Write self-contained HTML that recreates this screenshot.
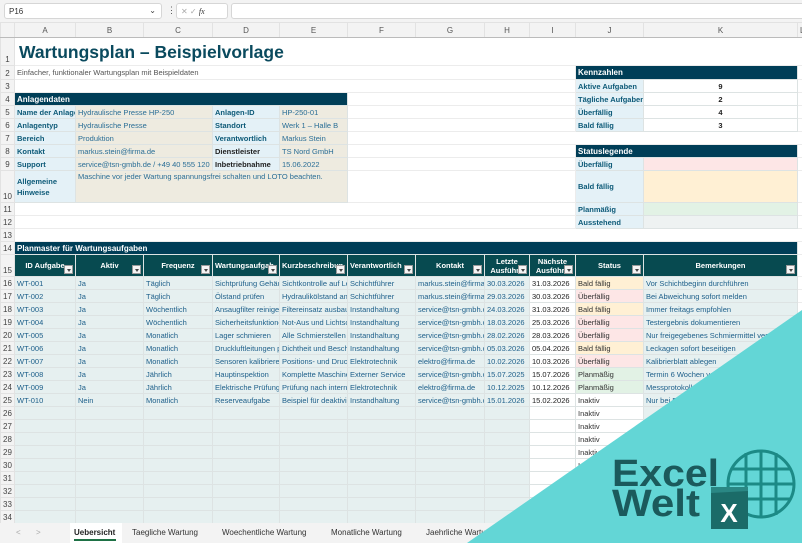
<!DOCTYPE html>
<html><head><meta charset="utf-8"><style>
*{box-sizing:border-box;margin:0;padding:0}
body{width:802px;height:543px;overflow:hidden;background:#fff;font-family:"Liberation Sans",sans-serif;position:relative}
#fb{position:absolute;left:0;top:0;width:802px;height:22px;background:#f3f3f3}
.box{position:absolute;background:#fff;border:1px solid #d6d6d6;border-radius:3px;top:3px;height:16px;font-size:8px;color:#333;padding:3px 4px}
table{position:absolute;left:0;top:22px;border-collapse:collapse;table-layout:fixed;width:802px}
td{height:13px;font-size:7.5px;white-space:nowrap;overflow:hidden;border:1px solid #dde3e3;padding:0 2px;color:#1d5f8a;line-height:11px}
td.rh{background:#f3f3f3;color:#444;text-align:center;border-color:#e2e2e2;font-size:8px;vertical-align:bottom;padding:0}
tr.ch td{background:#f3f3f3;color:#555;text-align:center;height:15px;border-color:#e2e2e2;border-bottom:1px solid #bbb;font-size:8px}
td.w{border-color:#ececec;background:#fff}
.hd{background:#003e57;color:#fff;font-weight:bold;font-size:8px}
.lb{background:#e4f1f7;color:#0d5a78;font-weight:bold}
.vl{background:#eeebe0;color:#2a6e96}
.kv{background:#fff;text-align:center;color:#222;font-weight:bold}
.th{background:#074a50;color:#fff;font-weight:bold;text-align:center;position:relative;font-size:7.5px;line-height:9px}
.th i{position:absolute;right:2px;bottom:2px;width:9px;height:9px;background:#f4f4f4;border:1px solid #999}
.th i:after{content:"";position:absolute;left:2px;top:3px;border-left:2px solid transparent;border-right:2px solid transparent;border-top:3px solid #444}
.d{background:#e6f0f0}
.wh{background:#fff;color:#222}
.bf{background:#fff0d4;color:#333}
.uf{background:#fde6e6;color:#333}
.pm{background:#e2f2e5;color:#333}
.ia{background:#fff;color:#333}
#tabs{position:absolute;left:0;top:523px;width:802px;height:20px;background:#f3f3f3;font-size:8px;color:#333}
#tabs span{position:absolute;top:5px}
</style></head><body>
<div id="fb">
<div class="box" style="left:4px;width:158px">P16<span style="position:absolute;right:5px;top:2px;color:#444">⌄</span></div>
<span style="position:absolute;left:167px;top:5px;font-size:9px;color:#555">⋮</span>
<div class="box" style="left:176px;width:52px;color:#aaa">✕ ✓ <i style="color:#333;font-family:'Liberation Serif'">fx</i></div>
<div class="box" style="left:231px;width:580px"></div>
</div>
<table>
<colgroup><col style="width:14px"><col style="width:61px"><col style="width:68px"><col style="width:69px"><col style="width:67px"><col style="width:68px"><col style="width:68px"><col style="width:69px"><col style="width:45px"><col style="width:46px"><col style="width:68px"><col style="width:154px"><col style="width:5px"></colgroup>
<tr class="ch"><td></td><td>A</td><td>B</td><td>C</td><td>D</td><td>E</td><td>F</td><td>G</td><td>H</td><td>I</td><td>J</td><td>K</td><td>L</td></tr>
<tr><td class="rh" style="height:28px">1</td><td class="w" colspan="12" style="font-size:17.5px;font-weight:bold;color:#0a4a5e;line-height:26px;overflow:visible;padding-left:4px;vertical-align:bottom">Wartungsplan – Beispielvorlage</td></tr>
<tr><td class="rh" style="height:14px">2</td><td class="w" colspan="9" style="color:#555;font-size:7.5px">Einfacher, funktionaler Wartungsplan mit Beispieldaten</td><td class="hd" colspan="2">Kennzahlen</td><td class="w"></td></tr>
<tr><td class="rh">3</td><td class="w" colspan="9"></td><td class="lb">Aktive Aufgaben</td><td class="kv">9</td><td class="w"></td></tr>
<tr><td class="rh">4</td><td class="hd" colspan="5">Anlagendaten</td><td class="w" colspan="4"></td><td class="lb">Tägliche Aufgaben</td><td class="kv">2</td><td class="w"></td></tr>
<tr><td class="rh">5</td><td class="lb">Name der Anlage</td><td class="vl" colspan="2">Hydraulische Presse HP-250</td><td class="lb">Anlagen-ID</td><td class="vl">HP-250-01</td><td class="w" colspan="4"></td><td class="lb">Überfällig</td><td class="kv">4</td><td class="w"></td></tr>
<tr><td class="rh">6</td><td class="lb">Anlagentyp</td><td class="vl" colspan="2">Hydraulische Presse</td><td class="lb">Standort</td><td class="vl">Werk 1 – Halle B</td><td class="w" colspan="4"></td><td class="lb">Bald fällig</td><td class="kv">3</td><td class="w"></td></tr>
<tr><td class="rh">7</td><td class="lb">Bereich</td><td class="vl" colspan="2">Produktion</td><td class="lb">Verantwortlich</td><td class="vl">Markus Stein</td><td class="w" colspan="7"></td></tr>
<tr><td class="rh">8</td><td class="lb">Kontakt</td><td class="vl" colspan="2">markus.stein@firma.de</td><td class="lb" style="color:#222">Dienstleister</td><td class="vl">TS Nord GmbH</td><td class="w" colspan="4"></td><td class="hd" colspan="2">Statuslegende</td><td class="w"></td></tr>
<tr><td class="rh">9</td><td class="lb">Support</td><td class="vl" colspan="2">service@tsn-gmbh.de / +49 40 555 120</td><td class="lb" style="color:#222">Inbetriebnahme</td><td class="vl">15.06.2022</td><td class="w" colspan="4"></td><td class="lb">Überfällig</td><td class="uf"></td><td class="w"></td></tr>
<tr><td class="rh" style="height:32px">10</td><td class="lb" style="white-space:normal;line-height:11px">Allgemeine Hinweise</td><td class="vl" colspan="4" style="vertical-align:top">Maschine vor jeder Wartung spannungsfrei schalten und LOTO beachten.</td><td class="w" colspan="4"></td><td class="lb">Bald fällig</td><td class="bf"></td><td class="w"></td></tr>
<tr><td class="rh">11</td><td class="w" colspan="9"></td><td class="lb">Planmäßig</td><td class="pm"></td><td class="w"></td></tr>
<tr><td class="rh">12</td><td class="w" colspan="9"></td><td class="lb">Ausstehend</td><td style="background:#eef2f2"></td><td class="w"></td></tr>
<tr><td class="rh">13</td><td class="w" colspan="12"></td></tr>
<tr><td class="rh">14</td><td class="hd" colspan="11">Planmaster für Wartungsaufgaben</td><td class="w"></td></tr>
<tr><td class="rh" style="height:22px">15</td><td class="th">ID Aufgabe<i></i></td><td class="th">Aktiv<i></i></td><td class="th">Frequenz<i></i></td><td class="th" style="text-align:left">Wartungsaufgab<i></i></td><td class="th" style="text-align:left">Kurzbeschreibun<i></i></td><td class="th" style="text-align:left">Verantwortlich<i></i></td><td class="th">Kontakt<i></i></td><td class="th">Letzte<br>Ausführu<i></i></td><td class="th">Nächste<br>Ausführu<i></i></td><td class="th">Status<i></i></td><td class="th">Bemerkungen<i></i></td><td class="w"></td></tr>
<tr><td class="rh">16</td><td class="d">WT-001</td><td class="d">Ja</td><td class="d">Täglich</td><td class="d">Sichtprüfung Gehäuse</td><td class="d">Sichtkontrolle auf Lecks</td><td class="d">Schichtführer</td><td class="d">markus.stein@firma.de</td><td class="d">30.03.2026</td><td class="wh">31.03.2026</td><td class="bf">Bald fällig</td><td class="d">Vor Schichtbeginn durchführen</td><td class="w"></td></tr>
<tr><td class="rh">17</td><td class="d">WT-002</td><td class="d">Ja</td><td class="d">Täglich</td><td class="d">Ölstand prüfen</td><td class="d">Hydraulikölstand am</td><td class="d">Schichtführer</td><td class="d">markus.stein@firma.de</td><td class="d">29.03.2026</td><td class="wh">30.03.2026</td><td class="uf">Überfällig</td><td class="d">Bei Abweichung sofort melden</td><td class="w"></td></tr>
<tr><td class="rh">18</td><td class="d">WT-003</td><td class="d">Ja</td><td class="d">Wöchentlich</td><td class="d">Ansaugfilter reinigen</td><td class="d">Filtereinsatz ausbauen</td><td class="d">Instandhaltung</td><td class="d">service@tsn-gmbh.de</td><td class="d">24.03.2026</td><td class="wh">31.03.2026</td><td class="bf">Bald fällig</td><td class="d">Immer freitags empfohlen</td><td class="w"></td></tr>
<tr><td class="rh">19</td><td class="d">WT-004</td><td class="d">Ja</td><td class="d">Wöchentlich</td><td class="d">Sicherheitsfunktionen</td><td class="d">Not-Aus und Lichtschranke</td><td class="d">Instandhaltung</td><td class="d">service@tsn-gmbh.de</td><td class="d">18.03.2026</td><td class="wh">25.03.2026</td><td class="uf">Überfällig</td><td class="d">Testergebnis dokumentieren</td><td class="w"></td></tr>
<tr><td class="rh">20</td><td class="d">WT-005</td><td class="d">Ja</td><td class="d">Monatlich</td><td class="d">Lager schmieren</td><td class="d">Alle Schmierstellen</td><td class="d">Instandhaltung</td><td class="d">service@tsn-gmbh.de</td><td class="d">28.02.2026</td><td class="wh">28.03.2026</td><td class="uf">Überfällig</td><td class="d">Nur freigegebenes Schmiermittel verwenden</td><td class="w"></td></tr>
<tr><td class="rh">21</td><td class="d">WT-006</td><td class="d">Ja</td><td class="d">Monatlich</td><td class="d">Druckluftleitungen prüfen</td><td class="d">Dichtheit und Beschädigung</td><td class="d">Instandhaltung</td><td class="d">service@tsn-gmbh.de</td><td class="d">05.03.2026</td><td class="wh">05.04.2026</td><td class="bf">Bald fällig</td><td class="d">Leckagen sofort beseitigen</td><td class="w"></td></tr>
<tr><td class="rh">22</td><td class="d">WT-007</td><td class="d">Ja</td><td class="d">Monatlich</td><td class="d">Sensoren kalibrieren</td><td class="d">Positions- und Drucksensor</td><td class="d">Elektrotechnik</td><td class="d">elektro@firma.de</td><td class="d">10.02.2026</td><td class="wh">10.03.2026</td><td class="uf">Überfällig</td><td class="d">Kalibrierblatt ablegen</td><td class="w"></td></tr>
<tr><td class="rh">23</td><td class="d">WT-008</td><td class="d">Ja</td><td class="d">Jährlich</td><td class="d">Hauptinspektion</td><td class="d">Komplette Maschine</td><td class="d">Externer Service</td><td class="d">service@tsn-gmbh.de</td><td class="d">15.07.2025</td><td class="wh">15.07.2026</td><td class="pm">Planmäßig</td><td class="d">Termin 6 Wochen vorher</td><td class="w"></td></tr>
<tr><td class="rh">24</td><td class="d">WT-009</td><td class="d">Ja</td><td class="d">Jährlich</td><td class="d">Elektrische Prüfung</td><td class="d">Prüfung nach interner</td><td class="d">Elektrotechnik</td><td class="d">elektro@firma.de</td><td class="d">10.12.2025</td><td class="wh">10.12.2026</td><td class="pm">Planmäßig</td><td class="d">Messprotokoll</td><td class="w"></td></tr>
<tr><td class="rh">25</td><td class="d">WT-010</td><td class="d">Nein</td><td class="d">Monatlich</td><td class="d">Reserveaufgabe</td><td class="d">Beispiel für deaktivierte</td><td class="d">Instandhaltung</td><td class="d">service@tsn-gmbh.de</td><td class="d">15.01.2026</td><td class="wh">15.02.2026</td><td class="ia">Inaktiv</td><td class="d">Nur bei Bedarf</td><td class="w"></td></tr>
<tr><td class="rh">26</td><td class="d"></td><td class="d"></td><td class="d"></td><td class="d"></td><td class="d"></td><td class="d"></td><td class="d"></td><td class="d"></td><td class="wh"></td><td class="ia">Inaktiv</td><td class="d"></td><td class="w"></td></tr>
<tr><td class="rh">27</td><td class="d"></td><td class="d"></td><td class="d"></td><td class="d"></td><td class="d"></td><td class="d"></td><td class="d"></td><td class="d"></td><td class="wh"></td><td class="ia">Inaktiv</td><td class="d"></td><td class="w"></td></tr>
<tr><td class="rh">28</td><td class="d"></td><td class="d"></td><td class="d"></td><td class="d"></td><td class="d"></td><td class="d"></td><td class="d"></td><td class="d"></td><td class="wh"></td><td class="ia">Inaktiv</td><td class="d"></td><td class="w"></td></tr>
<tr><td class="rh">29</td><td class="d"></td><td class="d"></td><td class="d"></td><td class="d"></td><td class="d"></td><td class="d"></td><td class="d"></td><td class="d"></td><td class="wh"></td><td class="ia">Inaktiv</td><td class="d"></td><td class="w"></td></tr>
<tr><td class="rh">30</td><td class="d"></td><td class="d"></td><td class="d"></td><td class="d"></td><td class="d"></td><td class="d"></td><td class="d"></td><td class="d"></td><td class="wh"></td><td class="ia">Inaktiv</td><td class="d"></td><td class="w"></td></tr>
<tr><td class="rh">31</td><td class="d"></td><td class="d"></td><td class="d"></td><td class="d"></td><td class="d"></td><td class="d"></td><td class="d"></td><td class="d"></td><td class="wh"></td><td class="ia">Inaktiv</td><td class="d"></td><td class="w"></td></tr>
<tr><td class="rh">32</td><td class="d"></td><td class="d"></td><td class="d"></td><td class="d"></td><td class="d"></td><td class="d"></td><td class="d"></td><td class="d"></td><td class="wh"></td><td class="ia"></td><td class="d"></td><td class="w"></td></tr>
<tr><td class="rh">33</td><td class="d"></td><td class="d"></td><td class="d"></td><td class="d"></td><td class="d"></td><td class="d"></td><td class="d"></td><td class="d"></td><td class="wh"></td><td class="ia"></td><td class="d"></td><td class="w"></td></tr>
<tr><td class="rh">34</td><td class="d"></td><td class="d"></td><td class="d"></td><td class="d"></td><td class="d"></td><td class="d"></td><td class="d"></td><td class="d"></td><td class="wh"></td><td class="ia"></td><td class="d"></td><td class="w"></td></tr>
</table>
<div id="tabs">
<span style="left:16px;color:#aaa">&lt;</span><span style="left:36px;color:#aaa">&gt;</span>
<div style="position:absolute;left:70px;top:0;width:52px;height:20px;background:#fff"></div>
<span style="left:74px;font-weight:bold;color:#222">Uebersicht</span>
<div style="position:absolute;left:74px;top:16px;width:42px;height:2px;background:#1e7145"></div>
<span style="left:132px">Taegliche Wartung</span>
<span style="left:222px">Woechentliche Wartung</span>
<span style="left:331px">Monatliche Wartung</span>
<span style="left:426px">Jaehrliche Wartung</span>
</div>
<svg style="position:absolute;left:0;top:0" width="802" height="543">
<polygon points="802,310 802,543 467,543" fill="#63d6d6"/>
<g fill="none" stroke="#1c8a86" stroke-width="3">
<circle cx="761" cy="484" r="33"/>
<line x1="728" y1="484" x2="794" y2="484"/><line x1="731" y1="469" x2="791" y2="469"/><line x1="731" y1="499" x2="791" y2="499"/>
<line x1="746" y1="453" x2="746" y2="515"/><line x1="761" y1="451" x2="761" y2="517"/><line x1="776" y1="453" x2="776" y2="515"/>
</g>
<rect x="711" y="487" width="37" height="42" fill="#1b6b68"/>
<polygon points="711,487 748,487 748,491 711,493" fill="#2a8784"/>
<text x="729" y="522" font-family="Liberation Sans" font-weight="bold" font-size="26" fill="#fff" text-anchor="middle">X</text>
<text x="612" y="486" font-family="Liberation Sans" font-weight="bold" font-size="38" fill="#1b5a5c" textLength="107" lengthAdjust="spacingAndGlyphs">Excel</text>
<text x="612" y="516" font-family="Liberation Sans" font-weight="bold" font-size="38" fill="#1b5a5c" textLength="88" lengthAdjust="spacingAndGlyphs">Welt</text>
</svg>
</body></html>
